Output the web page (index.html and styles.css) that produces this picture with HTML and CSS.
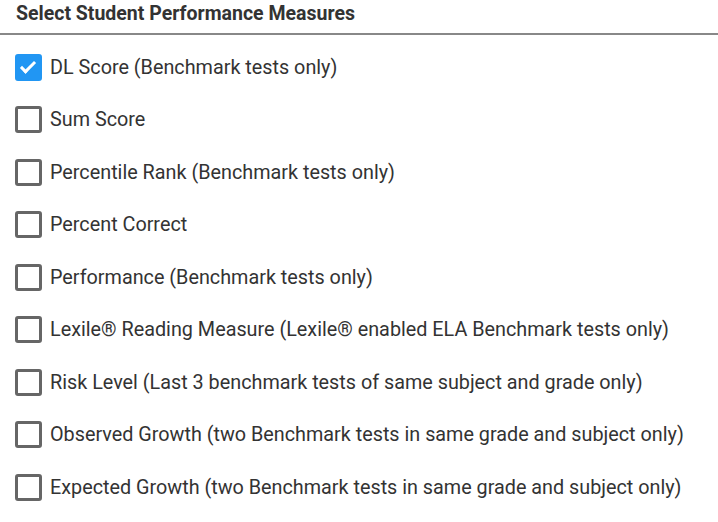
FILE: index.html
```html
<!DOCTYPE html>
<html lang="en">
<head>
    <meta charset="UTF-8">
    <meta name="viewport" content="width=device-width, initial-scale=1.0">
    <title>Student Performance Measures</title>
    <link rel="stylesheet" href="styles.css">
</head>
<body>
    <div class="panel">
        <div class="panel-title">Select Student Performance Measures</div>
        <div class="measure-list">
            <label class="measure"><input type="checkbox" checked><span class="box"></span>DL Score (Benchmark tests only)</label>
            <label class="measure"><input type="checkbox"><span class="box"></span>Sum Score</label>
            <label class="measure"><input type="checkbox"><span class="box"></span>Percentile Rank (Benchmark tests only)</label>
            <label class="measure"><input type="checkbox"><span class="box"></span>Percent Correct</label>
            <label class="measure"><input type="checkbox"><span class="box"></span>Performance (Benchmark tests only)</label>
            <label class="measure"><input type="checkbox"><span class="box"></span>Lexile® Reading Measure (Lexile® enabled ELA Benchmark tests only)</label>
            <label class="measure"><input type="checkbox"><span class="box"></span>Risk Level (Last 3 benchmark tests of same subject and grade only)</label>
            <label class="measure"><input type="checkbox"><span class="box"></span>Observed Growth (two Benchmark tests in same grade and subject only)</label>
            <label class="measure"><input type="checkbox"><span class="box"></span>Expected Growth (two Benchmark tests in same grade and subject only)</label>
        </div>
    </div>
</body>
</html>
```

FILE: styles.css
```css
html, body {
    margin: 0;
    padding: 0;
    background: #fff;
    font-family: Roboto, 'Liberation Sans', sans-serif;
    color: #333;
}
.panel {
    width: 718px;
}
.panel-title {
    font-size: 19.5px;
    font-weight: bold;
    color: #333;
    padding: 2px 0 0 16px;
    height: 31px;
    border-bottom: 2px solid #888;
}
.measure-list {
    padding-top: 6px;
}
.measure {
    display: flex;
    align-items: center;
    height: 52.5px;
    padding-left: 15px;
    font-size: 19.8px;
    cursor: pointer;
}
.measure input {
    display: none;
}
/* custom checkbox square */
.box {
    box-sizing: border-box;
    width: 27px;
    height: 27px;
    border: 3px solid #666;
    border-radius: 3px;
    margin-right: 8px;
    flex-shrink: 0;
    position: relative;
}
.measure input:checked + .box {
    background: #2196f3;
    border-color: #2196f3;
}
.measure input:checked + .box::after {
    content: '';
    box-sizing: border-box;
    position: absolute;
    left: 6px;
    top: 1px;
    width: 8px;
    height: 15px;
    border: solid #fff;
    border-width: 0 3px 3px 0;
    transform: rotate(45deg);
}
```
